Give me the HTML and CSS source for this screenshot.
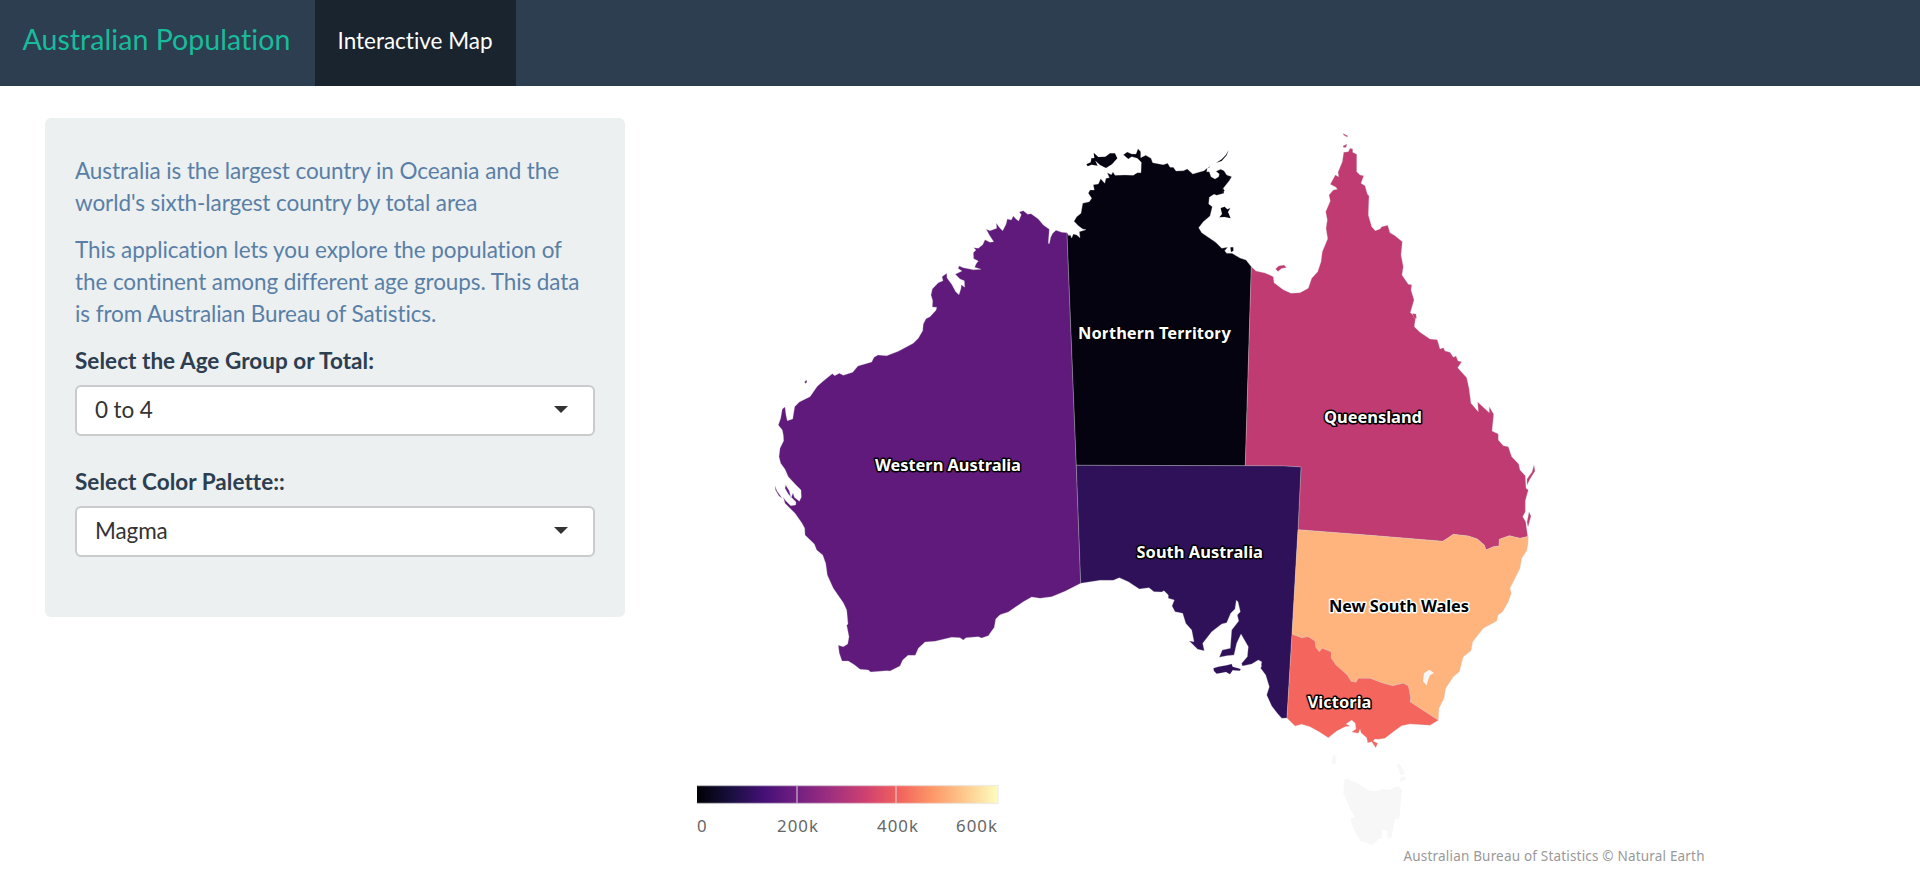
FILE: index.html
```html
<!DOCTYPE html>
<html lang="en">
<head>
<meta charset="utf-8">
<title>Australian Population</title>
<link rel="stylesheet" href="styles.css">
</head>
<body>
<header class="navbar">
  <a class="brand">Australian Population</a>
  <nav><a class="tab">Interactive Map</a></nav>
</header>
<main class="layout">
  <aside class="well">
    <p>Australia is the largest country in Oceania and the world's sixth-largest country by total area</p>
    <p>This application lets you explore the population of the continent among different age groups. This data is from Australian Bureau of Satistics.</p>
    <div class="field">
      <label>Select the Age Group or Total:</label>
      <div class="select"><span>0 to 4</span><i class="caret"></i></div>
    </div>
    <div class="field">
      <label>Select Color Palette::</label>
      <div class="select"><span>Magma</span><i class="caret"></i></div>
    </div>
  </aside>
  <svg class="map" viewBox="655 86 1265 793" width="1265" height="793">
    <defs>
      <linearGradient id="magma">
        <stop offset="0" stop-color="#000004"/><stop offset=".111" stop-color="#180f3e"/><stop offset=".222" stop-color="#451077"/><stop offset=".333" stop-color="#721f81"/><stop offset=".444" stop-color="#9f2f7f"/><stop offset=".556" stop-color="#cd4071"/><stop offset=".667" stop-color="#f1605d"/><stop offset=".778" stop-color="#fd9567"/><stop offset=".889" stop-color="#fec98d"/><stop offset="1" stop-color="#fcfdbf"/>
      </linearGradient>
    </defs>
    <g class="state wa">
      <path d="M1067 232.7L1061.7 232.3 1056 230.3 1052.7 233.3 1050.7 237.3 1049.3 243.7 1048.3 243.3 1049.3 229.3 1043.3 225 1038.3 219 1031 213.7 1027.7 214.3 1023.3 210.7 1019.3 212 1021.3 214.7 1018.7 221 1016 219 1013.3 216 1011.3 220 1007.3 219 1006 224.3 1002.7 230.7 1000 228.3 996.3 223.3 996.7 228.3 990 230.7 986.3 229.3 989.3 235 993.7 241.7 990 242.3 985 239.7 982.7 244.7 978.3 248.3 973.7 247.7 976 250 973.3 252.7 973.7 258.7 978.3 261 976 264 974.7 267.3 981 269.3 973.3 269.7 963.3 267.7 959.3 266 958 268.3 962 271 955.3 274.3 960 279 964.3 280.7 964.7 287.3 961.3 284.7 961 288.3 959 294.7 955.7 291.7 951.7 284.3 947 278 946.7 273.3 942 276.7 943 280.7 938.3 282.7 932.3 289 931 295 932.7 300.7 932.3 307 936.7 307.3 936 310.3 930 316.7 926 318.7 923.3 324 922.7 330.7 918.3 338.3 913.3 343.3 898.3 351.3 886.7 355.7 878 355 874 357.3 871.7 362 858 366 852.7 372.3 843.3 375.3 839.3 373.3 834.7 375.7 832.3 373.7 823.3 381 817.3 386.3 810 396.7 799.3 402 794.7 406.7 792.7 419 787.3 420.7 786 415 785 407 782.3 409 780.7 418.3 778.3 425 782.3 430 783.3 435 783.7 440.7 780 448.3 779 456.7 780.7 463.3 785 469.3 788.3 476.7 795 484 801 490 801.3 497.3 799.3 501.3 794.5 497.5 793 493 791 498 789.3 491 785.7 485 785 488.3 788.3 494 793.3 499.3 796 502 795.7 505 790.7 505.7 785 500 783.3 497.3 785 503.3 795 513.3 801.7 522.7 804.7 528.3 805 535 814.3 544 816.7 550 822.7 555 825.7 563.3 827.3 575 833.3 588.3 843.3 602.7 846.7 610 848 624 846.7 625.3 849 636.7 847.7 644 843.3 646.7 838.3 645.3 839.3 653.3 842 661 848.3 661 854.3 664.7 860 669.3 868.3 670 870.7 672 886.7 670.7 890 671 900 666 902.7 660 908 655.3 915.3 655.3 918.3 648.3 925 642 935 641.3 951.7 637.3 960 637.7 963.3 640 966 637.7 978.3 636.7 981.7 638 988.3 635.7 994.3 627.3 995.7 619 1000 614.7 1008.3 612 1023.3 601.7 1031.7 597 1040 598.3 1051.7 596.7 1065 591.3 1080.7 583.3 1076.3 465.3Z"/>
      <path d="M775 486L777 491 782 498 779 496 775.500 490ZM804.500 382L806.500 380 807 382 805.500 383.500Z"/>
    </g>
    <g class="state nt">
      <path d="M1067 232.7L1069 236 1070 234.500 1071.700 238 1073.300 234 1076.700 235 1080 237.700 1079.300 231.700 1086 229.700 1082.700 229 1078.300 225.700 1074 221.300 1076.700 216.700 1081 213.300 1082.700 203.300 1089.300 201.700 1091.700 198.300 1088.300 193.300 1090 190 1094.300 190 1093.300 184.700 1098.300 184 1100.700 178.700 1104.700 183.300 1106 178.300 1109.300 177.700 1107.300 172.700 1111.300 174.700 1113 172 1115 175.300 1125 175 1133.300 175.300 1137.300 172.700 1141 172.700 1141.300 162.300 1137.300 158.300 1131.700 156.700 1128.300 159 1123.300 154.700 1127.300 152 1131.700 154 1136 154 1138 148.700 1140.700 151.700 1140.700 157.700 1145.700 155.300 1151 158.300 1152.700 162.700 1163.300 164.700 1167.700 163.300 1170 167.300 1173.300 167.300 1176 171 1183.300 170.700 1187.300 169 1192.700 174 1204 170.700 1207.300 168 1206.700 171.700 1209.300 171.700 1211 176.700 1215 179 1218.700 176.700 1219.300 174 1216 171.300 1220.700 169.300 1224 170.700 1226.700 175 1231.700 176.700 1229.300 180.700 1223.300 188.300 1224 193.300 1216.700 195.300 1214 194.300 1209.300 197.300 1208.700 204 1212.300 206.700 1210 216 1203.300 221.700 1198.700 227.700 1201.700 232.700 1215.700 242.300 1221.700 248.300 1227.700 247.300 1224.700 250.700 1226.700 253.300 1232 253.300 1240 258 1246 260 1251.300 266.700 1245.300 465.700 1076.300 465.300Z"/>
      <path transform="translate(1050 130) scale(.33333)" d="M131 68L145 81 166 80 180 70 195 70 202 85 186 103 168 114 150 105 136 92 143 107 125 104 113 109 109 103 122 97 124 85 133 84ZM536 60L530 76 515 93 499 98 515 88 528 74ZM512 234L524 230 532 238 541 234 534 246 542 265 524 261 508 262 516 252ZM541 352L550 352 550 363 543 366ZM474 113L480 109 477 113ZM518 175L524 182 518 187Z"/>
    </g>
    <g class="state qld">
      <path d="M1251.300 266.700L1256 271 1265 273 1273.300 276.700 1274 282.700 1277.300 285.300 1283.300 289.700 1291 293.300 1300 292.700 1308.300 288.300 1311.700 278.300 1317.700 271.700 1321 261.700 1322.300 251.700 1327.700 238.700 1326 228.300 1327.300 220 1325.700 211.700 1330.300 201 1329 195 1333.300 190 1337.300 189.300 1336 187.300 1330.300 184.300 1335.300 175 1338.700 176.700 1338 172.300 1342.300 161.700 1343.700 152.300 1348.300 151.700 1350 148.300 1352.700 149 1352.700 152.300 1356.700 154.300 1356.700 171.700 1360 175 1363.700 175.700 1361 183.300 1365 185.700 1367.300 194 1369 196 1368.300 215 1371.700 226.700 1375.300 230.700 1380 229 1381.700 226.700 1387.700 225.300 1390 232.700 1395 235.700 1402.300 241.700 1401 255 1403.300 266.700 1402 275 1408.300 284.300 1411.700 284.700 1411 290 1414 300 1410.300 312.700 1415.700 316.700 1414.300 326.700 1420 332.300 1430 339 1437.300 339.700 1440 349 1443.300 347.700 1445 351 1450 352.300 1453.300 357.300 1456 356 1458 361 1461.700 361.700 1457.700 367.700 1466.700 377.700 1469 388.300 1471 403.300 1478.300 411.700 1477.700 402 1483.300 407.300 1489.300 412.700 1489.300 406.700 1493.700 414.300 1492 431 1498.300 434 1498.300 440 1503.300 445.700 1508.300 446.700 1511.700 456.700 1518.700 464 1520 470 1525.300 475.700 1526 488.300 1528.300 490 1525.300 500.700 1525.300 511.700 1522.700 516.700 1525.700 521.700 1527.700 536.500 1520 538.300 1509.300 535.700 1499.300 539.300 1499 546 1493.300 546.700 1486 550 1484.300 545 1477.300 539 1468.300 536 1453.300 534.300 1448.300 537.700 1442.700 541.300 1370 535.300 1298 529.700 1301 467 1285 466 1245.300 465.700Z"/>
      <path d="M1534 465L1535 471 1530 479 1527 485 1527 479 1532 472ZM1529 512L1531 516 1528 527 1527 522ZM1343.300 133.500L1348 136 1347 137 1343.500 135ZM1343 146L1347 144 1346 147.500 1343.500 147.500ZM1275.500 269L1278.500 266 1284 265 1286.500 267.500 1281.500 268.500 1278 271.500ZM1412.500 313.500L1416 314 1416.500 318.500 1414 318Z"/>
    </g>
    <g class="state sa">
      <path d="M1080.700 583.300L1100 580.300 1113.300 580.300 1119.300 577.700 1128.300 581.700 1139.300 589 1149 587.700 1154 591.700 1161.700 592 1164 590.700 1168.300 595 1168.300 598.300 1174.300 600 1172 606 1175 611.700 1182.700 613.300 1185.700 623.300 1191.700 630 1194 641.700 1189.300 641 1197.700 649.300 1204.300 650.700 1202.700 643.300 1211.700 631.700 1221.700 624 1226.700 622.700 1230.700 613.300 1235 609 1236.300 600.300 1238 601.700 1240.300 611.700 1237.300 615 1238.700 621 1231.700 630 1230.300 648.300 1222.300 650 1219.300 657.300 1226.700 655.700 1234 655 1236.700 643.300 1241 634 1248.300 646.700 1247.300 656.700 1241.700 663.300 1242.300 666 1251.700 664 1258.300 660 1261.700 661.700 1260.700 668.300 1265.700 675 1269.300 686.700 1266.700 695 1271.700 706 1277.300 713.300 1281.700 718.300 1287 718 1292 634.300 1298 529.700 1301 467 1285 466 1245.300 465.700 1076.300 465.300Z"/>
      <path transform="translate(1050 540) scale(.33333)" d="M490 385L505 380 530 376 545 372 548 380 572 387 570 392 548 391 540 403 528 396 500 401 492 393Z"/>
      <path class="water" transform="translate(1050 540) scale(.33333)" d="M612 373L622 368 627 372 618 377ZM630 374L635 377 633 383Z"/>
    </g>
    <path class="state nsw" d="M1298 529.700L1370 535.300 1442.700 541.300 1448.300 537.700 1453.300 534.300 1468.300 536 1477.300 539 1484.300 545 1486 550 1493.300 546.700 1499 546 1499.300 539.300 1509.300 535.700 1520 538.300 1528.300 536.500 1528 543.300 1526.700 550.700 1521.700 558.300 1520 568.300 1510 588.300 1511.300 593.300 1508.300 601.700 1502.700 611.700 1498 615 1496.700 621 1483.300 628.300 1472.700 641.700 1471 650.700 1463.300 656.700 1459.300 671.700 1453.300 676.700 1445.700 688.300 1444 698.300 1439 708.300 1438.300 720.300 1410 701.700 1410.700 698.300 1408.300 685.700 1403.300 683.300 1392.700 685.700 1381.700 682.700 1370 678.300 1358.300 678.300 1356 682.300 1351 681.300 1347.300 675 1336 665 1331.300 658.300 1331 651.700 1322.300 648.300 1319.300 651.700 1315.700 647.300 1315 641 1308.300 636.700 1301.700 637.700 1292 634.300Z"/>
    <path class="state vic" d="M1292 634.300L1301.700 637.700 1308.300 636.700 1315 641 1315.700 647.300 1319.300 651.700 1322.300 648.300 1331 651.700 1331.300 658.300 1336 665 1347.300 675 1351 681.300 1356 682.300 1358.300 678.300 1370 678.300 1381.700 682.700 1392.700 685.700 1403.300 683.300 1408.300 685.700 1410.700 698.300 1410 701.700 1438.300 720.300 1430 725.300 1410 724 1401.700 725.700 1393.300 731.700 1385 738.300 1378.300 739.300 1375 739 1373 741 1377.700 743.300 1375.700 747.700 1371.700 741.700 1367.700 742.700 1366.700 737.700 1361 732.700 1360 729 1358.300 733.300 1351.700 732 1356 729 1355.300 723.300 1351.700 720 1346 724 1350 726 1345 726.700 1336.700 731 1328.300 737.700 1320 732.300 1310 726.700 1301.700 724.300 1295 726 1287 718Z"/>
    <path class="empty" transform="translate(1270 610) scale(.33333)" d="M478 179L492 189 480 196 475 208 470 226 459 214 462 190Z"/>
    <path class="empty" transform="translate(1300 730) scale(.33333)" d="M133 149L145 144 152 153 168 157 210 183 235 184 243 178 268 180 293 167 306 180 303 210 298 265 285 268 280 290 275 322 263 325 262 300 246 300 245 325 235 328 218 346 200 340 180 332 162 300 151 268 164 260 148 232 130 190ZM96 84L102 72 110 84 106 102 95 102ZM288 108L297 100 313 124 312 134 302 135 294 112ZM299 143L313 139 319 149 300 155Z"/>
    <g class="labels">
      <text x="875" y="471" textLength="146">Western Australia</text>
      <text x="1078" y="338.500" textLength="153">Northern Territory</text>
      <text x="1324" y="423" textLength="98">Queensland</text>
      <text x="1136.500" y="558" textLength="126.500">South Australia</text>
      <text class="dark" x="1329" y="612" textLength="140">New South Wales</text>
      <text x="1307.500" y="708" textLength="64">Victoria</text>
    </g>
    <rect x="697" y="785.500" width="301" height="18" fill="url(#magma)"/>
    <path class="axis" d="M797 785V804M896 785V804M998 785V804M697 785.500H998M697 803.500H998"/>
    <g class="ticks">
      <text x="697" y="832" textLength="10">0</text>
      <text x="777" y="832" textLength="41">200k</text>
      <text x="877" y="832" textLength="41">400k</text>
      <text x="956" y="832" textLength="41">600k</text>
    </g>
    <text class="credits" x="1403.500" y="861" textLength="301">Australian Bureau of Statistics © Natural Earth</text>
  </svg>
</main>
</body>
</html>
```
FILE: styles.css
```css
* { box-sizing: border-box; }
body {
  margin: 0;
  background: #fff;
  color: #2c3e50;
  font: 22.5px/32px Lato, "Liberation Sans", sans-serif;
  font-variant-ligatures: none;
  overflow: hidden;
}
.navbar {
  display: flex;
  height: 86px;
  background: #2c3e50;
}
.brand {
  width: 315px;
  padding: 23px 0 0 22.5px;
  font-size: 28.5px;
  letter-spacing: .05px;
  color: #18bc9c;
  white-space: nowrap;
}
.tab {
  display: block;
  width: 201px;
  height: 86px;
  padding: 25px 0 0 22.5px;
  background: #1a242f;
  color: #fff;
  white-space: nowrap;
}
.layout { display: flex; }
.well {
  width: 580px;
  height: 499px;
  margin: 32px 30px 0 45px;
  padding: 37px 30px 0;
  border-radius: 6px;
  background: #ecf0f1;
}
.well p {
  margin: 0 0 15px;
  letter-spacing: -.09px;
  color: #5a7fa6;
}
.field { margin-bottom: 30px; }
.field label {
  display: block;
  margin-bottom: 8px;
  font-weight: 700;
  letter-spacing: .05px;
}
.select {
  display: flex;
  justify-content: space-between;
  align-items: center;
  height: 51px;
  padding: 0 25px 2px 18px;
  border: 2px solid #c9cbcc;
  border-radius: 6px;
  background: #fff;
  color: #333;
}
.select span { letter-spacing: -.1px; }
.caret {
  border: 7.5px solid transparent;
  border-top-color: #333;
  border-bottom: 0;
}
.map { display: block; flex: none; }
.state { stroke: #ccc; stroke-width: .3; }
.wa { fill: #5f1a7b; }
.nt { fill: #050310; }
.qld { fill: #c03b71; }
.sa { fill: #2f1159; }
.nsw { fill: #ffb47d; }
.vic { fill: #f3655d; }
.water { fill: #fff; stroke: none; }
.empty { fill: #f7f7f7; }
.labels {
  font: 700 16.5px "Noto Sans", sans-serif;
  fill: #fff;
  stroke: #000;
  stroke-width: 3px;
  stroke-linejoin: round;
  paint-order: stroke;
}
.labels .dark { fill: #000; stroke: #fff; }
.axis { fill: none; stroke: #e6e6e6; stroke-opacity: .6; stroke-width: 1.5; }
.ticks { font: 16.8px "Noto Sans", sans-serif; fill: #666; }
.credits { font: 13.5px "Noto Sans", sans-serif; fill: #999; }
```
